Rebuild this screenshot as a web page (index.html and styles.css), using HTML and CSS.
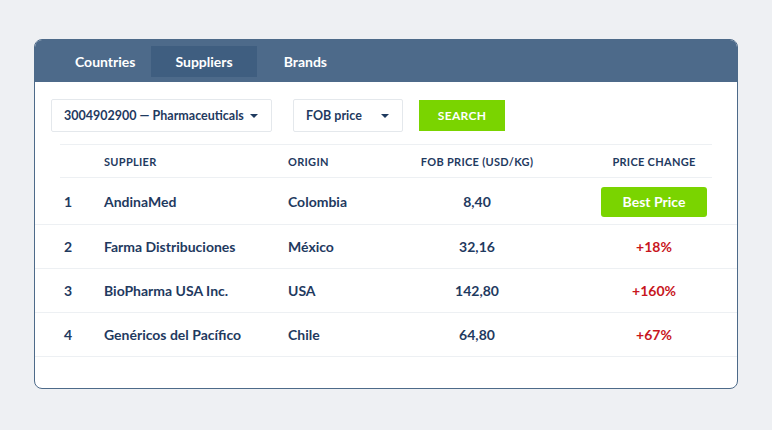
FILE: index.html
```html
<!DOCTYPE html>
<html lang="en">

<head>
    <meta charset="UTF-8">
    <meta name="viewport" content="width=device-width, initial-scale=1.0">
    <title>Suppliers</title>
    <link rel="stylesheet" href="styles.css">
</head>

<body>

    <div class="card">

        <!-- tabs -->
        <div class="tabs">
            <a class="tab tab-countries">Countries</a>
            <a class="tab active">Suppliers</a>
            <a class="tab tab-brands">Brands</a>
        </div>

        <!-- filters -->
        <div class="toolbar">
            <div class="select select-product">
                <span>3004902900 — Pharmaceuticals</span>
                <span class="caret"></span>
            </div>
            <div class="select select-price">
                <span>FOB price</span>
                <span class="caret"></span>
            </div>
            <button class="search">SEARCH</button>
        </div>

        <!-- table -->
        <div class="table">
            <div class="row head">
                <div></div>
                <div>SUPPLIER</div>
                <div>ORIGIN</div>
                <div class="center">FOB PRICE (USD/KG)</div>
                <div class="center">PRICE CHANGE</div>
            </div>
            <div class="row first">
                <div class="num">1</div>
                <div>AndinaMed</div>
                <div>Colombia</div>
                <div class="center">8,40</div>
                <div class="center"><span class="best">Best Price</span></div>
            </div>
            <div class="row">
                <div class="num">2</div>
                <div>Farma Distribuciones</div>
                <div>México</div>
                <div class="center">32,16</div>
                <div class="center up">+18%</div>
            </div>
            <div class="row">
                <div class="num">3</div>
                <div>BioPharma USA Inc.</div>
                <div>USA</div>
                <div class="center">142,80</div>
                <div class="center up">+160%</div>
            </div>
            <div class="row">
                <div class="num">4</div>
                <div>Genéricos del Pacífico</div>
                <div>Chile</div>
                <div class="center">64,80</div>
                <div class="center up">+67%</div>
            </div>
        </div>

    </div>

</body>

</html>
```

FILE: styles.css
```css
body {
    margin: 0;
    padding: 39px 34px;
    background: #eef0f3;
    font-family: Lato, "Open Sans", sans-serif;
    font-weight: 700;
    color: #1f3a5f;
}

.card {
    height: 348px;
    background: white;
    border: 1px solid #4d6a89;
    border-radius: 8px;
    overflow: hidden;
}

/* tabs */

.tabs {
    display: flex;
    background: #4d6a8a;
    padding: 6px 0 5px 17px;
}

.tab {
    height: 31px;
    line-height: 31px;
    padding: 0 24px;
    color: white;
    font-size: 14px;
}

.tab-countries {
    padding-left: 23px;
    padding-right: 16px;
}

.tab-brands {
    padding-left: 27px;
}

.tab.active {
    background: #3f5e80;
}

/* filters */

.toolbar {
    display: flex;
    align-items: center;
    padding: 17px 16px 0;
}

.select {
    display: flex;
    align-items: center;
    justify-content: space-between;
    box-sizing: border-box;
    height: 33px;
    padding: 0 13px 0 12px;
    border: 1px solid #e4e8ec;
    border-radius: 2px;
    font-size: 12.5px;
}

.select-product {
    width: 221px;
}

.select-price {
    width: 110px;
    margin-left: 21px;
}

.caret {
    width: 0;
    height: 0;
    border-left: 4px solid transparent;
    border-right: 4px solid transparent;
    border-top: 4px solid #1f3a5f;
}

.search {
    width: 86px;
    height: 31px;
    margin-left: 16px;
    border: none;
    background: #7ad400;
    color: white;
    font-family: inherit;
    font-weight: 700;
    font-size: 12px;
    letter-spacing: 0.3px;
}

/* table */

.table {
    margin-top: 12px;
}

.row {
    display: grid;
    grid-template-columns: 44px 184px 70px 238px 116px;
    align-items: center;
    height: 43px;
    padding: 0 25px;
    border-bottom: 1px solid #edf0f3;
    font-size: 14px;
}

.row.head {
    height: 32px;
    margin: 0 25px;
    padding: 0;
    border-top: 1px solid #edf0f3;
    font-size: 11px;
    letter-spacing: 0.3px;
}

.row.first {
    height: 46px;
}

.num {
    padding-left: 4px;
}

.center {
    text-align: center;
}

.up {
    color: #c8161d;
}

.best {
    display: inline-block;
    width: 106px;
    height: 30px;
    line-height: 30px;
    margin-top: 2px;
    background: #7ad400;
    border-radius: 3px;
    color: white;
    font-size: 14px;
}
```
